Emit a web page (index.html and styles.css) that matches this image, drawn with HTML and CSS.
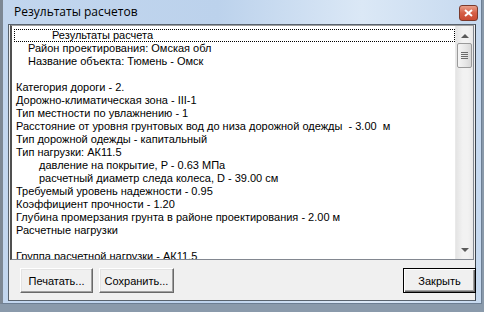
FILE: index.html
```html
<!DOCTYPE html>
<html>
<head>
    <title>Результаты расчетов</title>
    <link rel="stylesheet" href="styles.css">
</head>
<body>

<div class="window">
    <div class="titlebar">
        <span class="title">Результаты расчетов</span>
        <span class="close">
            <svg width="9" height="8" viewBox="0 0 9 8"><path d="M1 1 L8 7 M8 1 L1 7" stroke="#fff" stroke-width="2"/></svg>
        </span>
    </div>
    <div class="client">
        <div class="listbox">
            <div class="lines">
                <div class="row focus"><span class="ind-title">Результаты расчета</span></div>
                <div class="row"><span class="ind-1">Район проектирования: Омская обл</span></div>
                <div class="row"><span class="ind-1">Название объекта: Тюмень - Омск</span></div>
                <div class="row"></div>
                <div class="row">Категория дороги - 2.</div>
                <div class="row">Дорожно-климатическая зона - III-1</div>
                <div class="row">Тип местности по увлажнению - 1</div>
                <div class="row">Расстояние от уровня грунтовых вод до низа дорожной одежды &nbsp;- 3.00 &nbsp;м</div>
                <div class="row">Тип дорожной одежды - капитальный</div>
                <div class="row">Тип нагрузки: АК11.5</div>
                <div class="row"><span class="ind-2">давление на покрытие, P - 0.63 МПа</span></div>
                <div class="row"><span class="ind-2">расчетный диаметр следа колеса, D - 39.00 см</span></div>
                <div class="row">Требуемый уровень надежности - 0.95</div>
                <div class="row">Коэффициент прочности - 1.20</div>
                <div class="row">Глубина промерзания грунта в районе проектирования - 2.00 м</div>
                <div class="row">Расчетные нагрузки</div>
                <div class="row"></div>
                <div class="row">Группа расчетной нагрузки - АК11.5</div>
            </div>
            <div class="scrollbar">
                <div class="arrow up"></div>
                <div class="thumb"><span></span><span></span><span></span><span></span></div>
                <div class="track"></div>
                <div class="arrow down"></div>
            </div>
        </div>
        <div class="buttons">
            <div class="btn print">Печатать...</div>
            <div class="btn save">Сохранить...</div>
            <div class="spacer"></div>
            <div class="btn default">Закрыть</div>
        </div>
    </div>
</div>

</body>
</html>
```

FILE: styles.css
```css
body {
    margin: 0;
    background: #8a9aab;
    font-family: "Liberation Sans", Arial, sans-serif;
    font-size: 11px;
}

.window {
    width: 482px;
    height: 304px;
    box-sizing: border-box;
    background: linear-gradient(to right, #c2d6ee 0%, #bcd2ec 45%, #dbe8f6 75%, #c6d9ef 100%);
    border: 1px solid #6c7e93;
    border-top: none;
    border-left: 3px solid #7d8894;
    padding: 0 5px 2px 5px;
    display: flex;
    flex-direction: column;
}

.titlebar {
    height: 24px;
    display: flex;
    align-items: center;
    justify-content: space-between;
    padding-left: 6px;
}

.title {
    font-family: "Open Sans", "Noto Sans", sans-serif;
    font-size: 12px;
    color: #000;
    margin-top: -1px;
}

.close {
    width: 19px;
    height: 16px;
    margin-top: 2px;
    margin-right: -2px;
    box-sizing: border-box;
    border: 1px solid #7a3a2c;
    border-radius: 3px;
    background: linear-gradient(#e9a08a, #d55f46 50%, #c94a32);
    display: flex;
    align-items: center;
    justify-content: center;
}

.client {
    flex: 1;
    background: #f0f0f0;
    border: 1px solid #59636e;
    border-right-color: #3c434b;
    display: flex;
    flex-direction: column;
    padding: 0 1px 0 1px;
}

.listbox {
    height: 233px;
    display: flex;
    border: 1px solid #828790;
    border-top-color: #a0a0a0;
    border-left: 2px solid #505050;
    background: #fff;
    overflow: hidden;
}

.lines {
    flex: 1;
    padding: 3px 0 0 2px;
    overflow: hidden;
}

.row {
    height: 13px;
    line-height: 13px;
    padding-left: 2px;
    white-space: nowrap;
    color: #000;
}

.row.focus {
    height: 11px;
    line-height: 11px;
    border: 1px dotted #000;
    padding-left: 1px;
}

.ind-title { padding-left: 36px; }
.ind-1 { padding-left: 12px; }
.ind-2 { padding-left: 23px; }

.scrollbar {
    width: 17px;
    display: flex;
    flex-direction: column;
    background: linear-gradient(to right, #e4e4e4, #f2f2f2 40%, #f2f2f2 70%, #e8e8e8);
    border-left: 1px solid #e9e9e9;
}

.arrow {
    height: 17px;
    display: flex;
    align-items: center;
    justify-content: center;
}

.arrow.up::after {
    content: "";
    border-left: 4px solid transparent;
    border-right: 4px solid transparent;
    border-bottom: 4px solid #5a5a5a;
    margin-top: 3px;
}

.arrow.down::after {
    content: "";
    border-left: 4px solid transparent;
    border-right: 4px solid transparent;
    border-top: 4px solid #5a5a5a;
    margin-bottom: 1px;
}

.thumb {
    height: 25px;
    margin: 0 1px;
    box-sizing: border-box;
    border: 1px solid #9a9a9a;
    border-radius: 2px;
    background: linear-gradient(to right, #f5f5f5, #e6e6e6 60%, #d8d8d8);
    display: flex;
    flex-direction: column;
    align-items: center;
    justify-content: center;
    gap: 1px;
}

.thumb span {
    width: 7px;
    height: 1px;
    background: #6b6b6b;
}

.track {
    flex: 1;
}

.buttons {
    flex: 1;
    display: flex;
    align-items: flex-start;
    padding: 8px 0 0 10px;
    margin-right: -2px;
    gap: 6px;
}

.spacer {
    flex: 1;
}

.btn {
    height: 25px;
    box-sizing: border-box;
    display: flex;
    align-items: center;
    justify-content: center;
    background: #f0f0f0;
    border: 1px solid;
    border-color: #fff #696969 #696969 #fff;
    box-shadow: inset -1px -1px 0 #a0a0a0, inset 1px 1px 0 #e3e3e3;
    color: #000;
}

.btn.print { width: 73px; }
.btn.save { width: 75px; }

.btn.default {
    width: 73px;
    border: 1px solid #000;
    box-shadow: inset 1px 1px 0 #fff, inset -1px -1px 0 #696969, inset -2px -2px 0 #a0a0a0;
}
```
